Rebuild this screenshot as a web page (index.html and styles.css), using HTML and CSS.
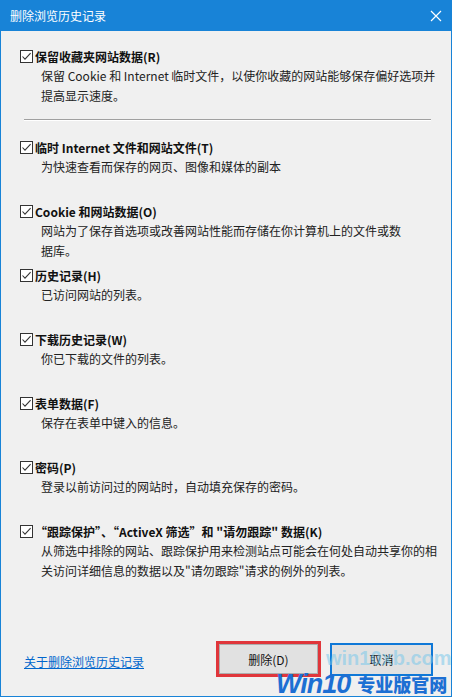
FILE: index.html
```html
<!DOCTYPE html>
<html lang="zh-CN">
<head>
<meta charset="utf-8">
<title>删除浏览历史记录</title>
<link rel="stylesheet" href="styles.css">
</head>
<body>
<div class="window">
  <div class="titlebar">
    <span class="title">删除浏览历史记录</span>
    <svg class="close" width="12" height="12" viewBox="0 0 12 12"><path d="M1 1L11 11M11 1L1 11" stroke="#fff" stroke-width="1.2" fill="none"/></svg>
  </div>
  <div class="content">
    <div class="item">
      <div class="label"><span class="cb"><svg width="11" height="11" viewBox="0 0 11 11"><path d="M1.5 5.5L4 8.2L9.6 2.2" stroke="#333" stroke-width="1.1" fill="none"/></svg></span>保留收藏夹网站数据(R)</div>
      <div class="desc">保留 Cookie 和 Internet 临时文件，以使你收藏的网站能够保存偏好选项并提高显示速度。</div>
    </div>
    <div class="sep"></div>
    <div class="item">
      <div class="label"><span class="cb"><svg width="11" height="11" viewBox="0 0 11 11"><path d="M1.5 5.5L4 8.2L9.6 2.2" stroke="#333" stroke-width="1.1" fill="none"/></svg></span>临时 Internet 文件和网站文件(T)</div>
      <div class="desc">为快速查看而保存的网页、图像和媒体的副本</div>
    </div>
    <div class="item">
      <div class="label"><span class="cb"><svg width="11" height="11" viewBox="0 0 11 11"><path d="M1.5 5.5L4 8.2L9.6 2.2" stroke="#333" stroke-width="1.1" fill="none"/></svg></span>Cookie 和网站数据(O)</div>
      <div class="desc narrow">网站为了保存首选项或改善网站性能而存储在你计算机上的文件或数据库。</div>
    </div>
    <div class="item">
      <div class="label"><span class="cb"><svg width="11" height="11" viewBox="0 0 11 11"><path d="M1.5 5.5L4 8.2L9.6 2.2" stroke="#333" stroke-width="1.1" fill="none"/></svg></span>历史记录(H)</div>
      <div class="desc">已访问网站的列表。</div>
    </div>
    <div class="item">
      <div class="label"><span class="cb"><svg width="11" height="11" viewBox="0 0 11 11"><path d="M1.5 5.5L4 8.2L9.6 2.2" stroke="#333" stroke-width="1.1" fill="none"/></svg></span>下载历史记录(W)</div>
      <div class="desc">你已下载的文件的列表。</div>
    </div>
    <div class="item">
      <div class="label"><span class="cb"><svg width="11" height="11" viewBox="0 0 11 11"><path d="M1.5 5.5L4 8.2L9.6 2.2" stroke="#333" stroke-width="1.1" fill="none"/></svg></span>表单数据(F)</div>
      <div class="desc">保存在表单中键入的信息。</div>
    </div>
    <div class="item">
      <div class="label"><span class="cb"><svg width="11" height="11" viewBox="0 0 11 11"><path d="M1.5 5.5L4 8.2L9.6 2.2" stroke="#333" stroke-width="1.1" fill="none"/></svg></span>密码(P)</div>
      <div class="desc">登录以前访问过的网站时，自动填充保存的密码。</div>
    </div>
    <div class="item">
      <div class="label"><span class="cb"><svg width="11" height="11" viewBox="0 0 11 11"><path d="M1.5 5.5L4 8.2L9.6 2.2" stroke="#333" stroke-width="1.1" fill="none"/></svg></span>“跟踪保护”、“ActiveX 筛选”和 "请勿跟踪" 数据(K)</div>
      <div class="desc">从筛选中排除的网站、跟踪保护用来检测站点可能会在何处自动共享你的相关访问详细信息的数据以及"请勿跟踪"请求的例外的列表。</div>
    </div>
  </div>
  <div class="footer">
    <a class="link" href="#">关于删除浏览历史记录</a>
    <div class="buttons">
      <span class="mark"><span class="btn">删除(D)</span></span>
      <span class="btn default">取消</span>
    </div>
  </div>
  <div class="wm1">win10xb.com</div>
  <div class="wm2"><span class="wm-en">Win10</span><span class="wm-cn">专业版官网</span></div>
</div>
</body>
</html>
```
FILE: styles.css
```css
* { box-sizing: border-box; }
html, body { margin: 0; padding: 0; }
body {
  width: 452px;
  height: 697px;
  font-family: "Segoe UI", "Noto Sans CJK SC", "Noto Sans", sans-serif;
  font-size: 12px;
  color: #1a1a1a;
  background: #f0f0f0;
}
.window {
  position: relative;
  width: 452px;
  height: 697px;
  display: flex;
  flex-direction: column;
  background: #f0f0f0;
  border: 1px solid #1883d7;
  border-top: none;
  overflow: hidden;
}
.titlebar {
  height: 31px;
  margin: 0 -1px;
  background: #1883d7;
  display: flex;
  align-items: center;
  justify-content: space-between;
  padding: 0 10px 0 10px;
  color: #fff;
  flex: none;
}
.title {
  font-family: "Noto Sans CJK SC", sans-serif;
  font-size: 12px;
  line-height: 16px;
}
.content {
  padding: 16px 0 0 19px;
}
.item {
  height: 64px;
}
.label {
  display: flex;
  align-items: center;
  height: 19px;
  font-family: "Noto Sans CJK SC", sans-serif;
  font-weight: bold;
  font-size: 12px;
  line-height: 19px;
  color: #111;
  white-space: nowrap;
}
.cb {
  width: 13px;
  height: 13px;
  border: 1px solid #333;
  background: #fff;
  margin-right: 2px;
  display: flex;
  align-items: center;
  justify-content: center;
  flex: none;
}
.desc {
  font-family: "Noto Sans CJK SC", sans-serif;
  font-size: 12px;
  line-height: 19.5px;
  padding-left: 21px;
  padding-right: 8px;
  color: #222;
}
.desc.narrow { padding-right: 40px; }
.sep {
  margin: 8px 20px 17px 4px;
  height: 2px;
  border-top: 1px solid #a0a0a0;
  border-bottom: 1px solid #ffffff;
}
.footer {
  margin-top: auto;
  display: flex;
  align-items: center;
  justify-content: space-between;
  padding: 0 18px 19px 23px;
}
.link {
  font-family: "Noto Sans CJK SC", sans-serif;
  font-size: 12px;
  color: #0066cc;
  text-decoration: underline;
  margin-top: 4px;
}
.buttons {
  display: flex;
  align-items: center;
  gap: 9px;
}
.mark {
  display: flex;
  border: 3px solid #e0363b;
}
.btn {
  display: flex;
  align-items: center;
  justify-content: center;
  width: 99px;
  height: 30px;
  background: #e1e1e1;
  border: 1px solid #adadad;
  font-family: "Noto Sans CJK SC", sans-serif;
  font-size: 12px;
  color: #111;
}
.btn.default {
  width: 103px;
  height: 33px;
  border: 2px solid #0f78d7;
}
.wm1 {
  position: absolute;
  left: 325px;
  top: 647px;
  font-family: "Liberation Sans", Arial, sans-serif;
  font-weight: bold;
  font-size: 20px;
  line-height: 22px;
  color: rgba(120, 200, 235, 0.55);
}
.wm2 {
  position: absolute;
  left: 275px;
  top: 671px;
  height: 26px;
  display: flex;
  align-items: center;
  color: #1d6fd3;
  white-space: nowrap;
}
.wm-en {
  font-family: "Liberation Sans", Arial, sans-serif;
  font-style: italic;
  font-weight: bold;
  font-size: 27px;
  line-height: 26px;
  letter-spacing: -1px;
}
.wm-cn {
  font-family: "Noto Sans CJK SC", sans-serif;
  font-weight: 900;
  font-size: 18px;
  line-height: 26px;
  margin-left: 7px;
}
```
